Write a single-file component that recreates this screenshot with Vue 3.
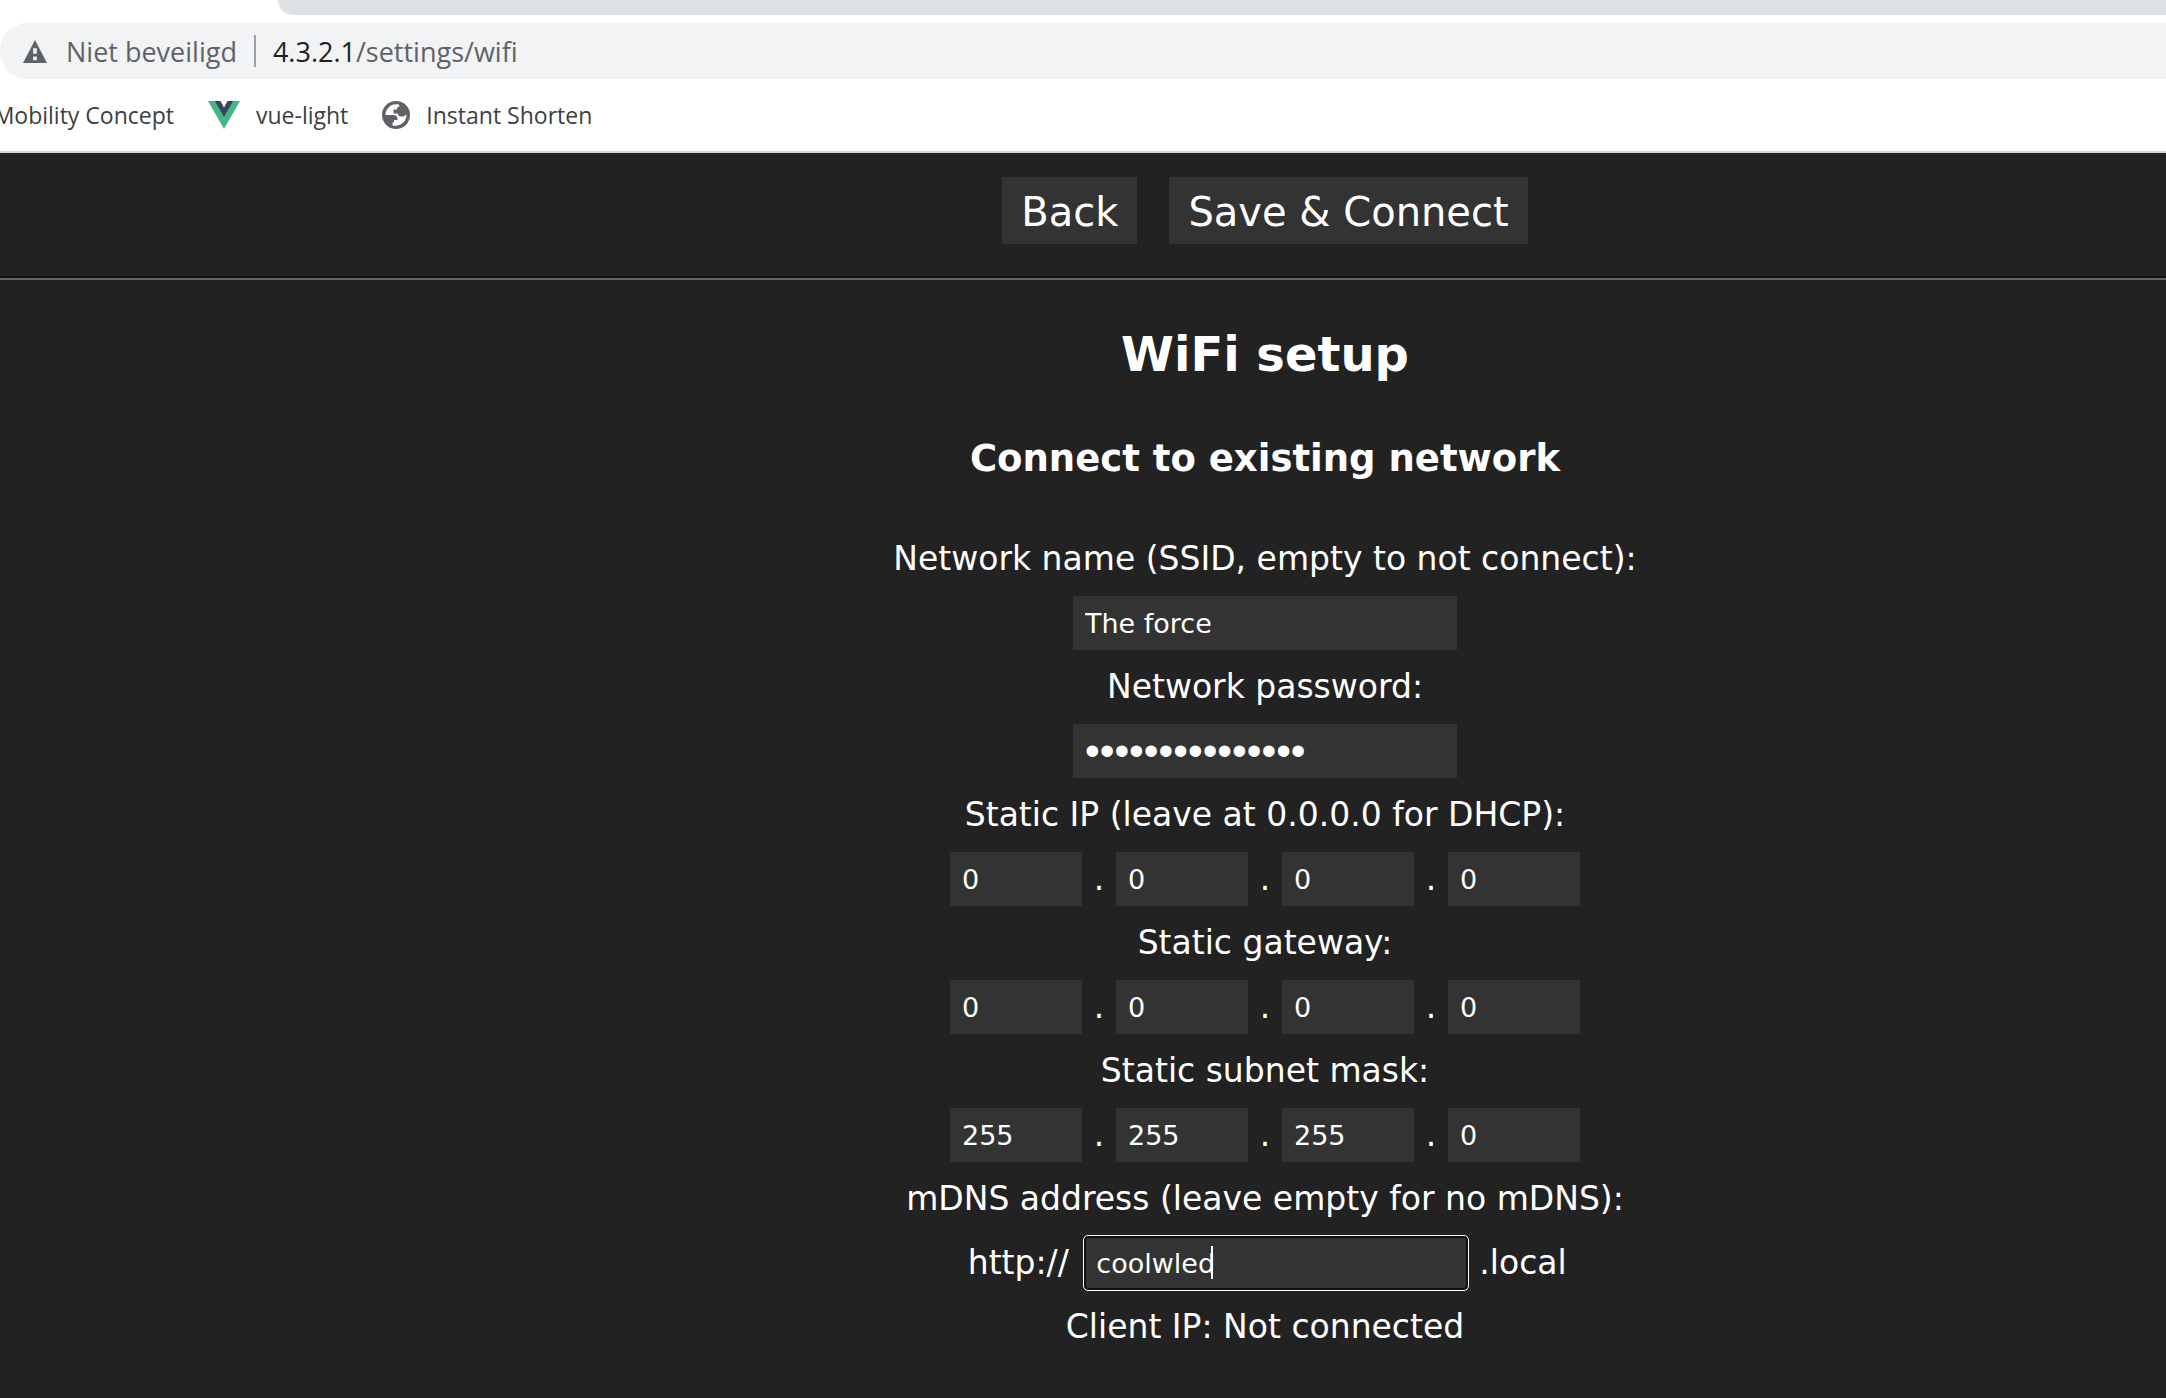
<script setup>
import { ref, reactive } from 'vue'

const ssid = ref('The force')
const password = ref('maytheforcebe12')
const mdns = ref('coolwled')
const addresses = reactive([
  { id: 'ip', label: 'Static IP (leave at 0.0.0.0 for DHCP):', parts: ['0', '0', '0', '0'] },
  { id: 'gateway', label: 'Static gateway:', parts: ['0', '0', '0', '0'] },
  { id: 'subnet', label: 'Static subnet mask:', parts: ['255', '255', '255', '0'] },
])
</script>

<template>
  <div class="window">
    <header class="browser">
      <div class="tabs"></div>
      <div class="address">
        <svg class="warning" viewBox="0 0 26 26" aria-hidden="true">
          <path d="M13 1 26 26H0Z" fill="#5f6368" />
          <path d="M11 10h4v6h-4zM11 19h4v4h-4z" fill="#f1f3f4" />
        </svg>
        <span class="insecure">Niet beveiligd</span>
        <span class="divider"></span>
        <span class="url"><b>4.3.2.1</b>/settings/wifi</span>
      </div>
      <nav class="bookmarks">
        <a href="#" class="clipped">Mobility Concept</a>
        <a href="#">
          <svg class="vue" viewBox="0 0 32 28" aria-hidden="true">
            <path d="M0 0h6.5L16 16.5 25.5 0H32L16 28Z" fill="#41b883" />
            <path d="M6.5 0h6L16 6.5 19.5 0h6L16 16.5Z" fill="#35495e" />
          </svg>
          vue-light
        </a>
        <a href="#">
          <svg class="globe" viewBox="0 0 28 28" aria-hidden="true">
            <circle cx="14" cy="14" r="14" fill="#5f6368" />
            <path
              d="M16.5 3C14 3.500 10 3 7 6 4.500 8.500 3.500 11 3.500 14H11c3 0 4.500 1.500 4.500 4v1h-3.500v2.500h-1.500V24.500c7 1.500 14-3 14-11l-1.500 1c-1 1-2.500 1-4 1-2 0-3-1-3-3h-4.500V8.500h3.500c0-2 .5-3 2.500-3Z"
              fill="#fff"
            />
          </svg>
          Instant Shorten
        </a>
      </nav>
    </header>

    <form class="page" @submit.prevent>
      <div class="actions">
        <button type="button">Back</button>
        <button type="submit">Save &amp; Connect</button>
      </div>
      <hr />
      <main class="settings">
        <h2>WiFi setup</h2>
        <h3>Connect to existing network</h3>
        <label class="row" for="ssid">Network name (SSID, empty to not connect):</label>
        <div class="row"><input id="ssid" v-model="ssid" class="wide" type="text" /></div>
        <label class="row" for="password">Network password:</label>
        <div class="row"><input id="password" v-model="password" class="wide" type="password" /></div>
        <template v-for="address in addresses" :key="address.id">
          <label class="row" :for="address.id + '-0'">{{ address.label }}</label>
          <div class="row">
            <template v-for="(part, i) in address.parts" :key="i">
              <span v-if="i" class="dot">.</span>
              <input
                :id="address.id + '-' + i"
                v-model="address.parts[i]"
                class="octet"
                type="text"
                inputmode="numeric"
                :aria-label="address.label + ' ' + (i + 1)"
              />
            </template>
          </div>
        </template>
        <label class="row" for="mdns">mDNS address (leave empty for no mDNS):</label>
        <div class="row mdns">
          <span class="scheme">http://</span>
          <span class="focused">
            <input id="mdns" v-model="mdns" class="wide" type="text" />
            <span class="caret"></span>
          </span>
          <span>.local</span>
        </div>
        <div class="row">Client IP: Not connected</div>
      </main>
    </form>
  </div>
</template>

<style>
body {
  margin: 0;
  background: #222;
}
</style>

<style scoped>
.window {
  min-height: 100vh;
  overflow: hidden;
  display: flex;
  flex-direction: column;
}
.browser {
  background: #fff;
  border-bottom: 2px solid #d4d4d4;
  font-family: "Open Sans", "Noto Sans", sans-serif;
}
.tabs {
  height: 15px;
  margin-left: 278px;
  background: #dde1e6;
  border-bottom-left-radius: 16px;
}
.address {
  display: flex;
  align-items: center;
  height: 56px;
  margin-top: 8px;
  padding-left: 22px;
  background: #f1f3f4;
  border-radius: 28px 0 0 28px;
  color: #5f6368;
  font-size: 27px;
  white-space: nowrap;
}
.warning {
  width: 26px;
  height: 24px;
}
.insecure {
  margin-left: 18px;
}
.divider {
  width: 2px;
  height: 32px;
  margin: 0 17px;
  background: #9aa0a6;
}
.url b {
  color: #202124;
  font-weight: 400;
}
.bookmarks {
  display: flex;
  align-items: center;
  gap: 34px;
  height: 72px;
}
.bookmarks a {
  display: flex;
  align-items: center;
  gap: 16px;
  color: #3c4043;
  font-size: 23px;
  text-decoration: none;
  white-space: nowrap;
}
.bookmarks .clipped {
  width: 174px;
  justify-content: flex-end;
}
.vue {
  width: 32px;
  height: 28px;
}
.globe {
  width: 28px;
  height: 28px;
}
.page {
  flex: 1;
  color: #fff;
  font: 33px/64px "DejaVu Sans", sans-serif;
}
.actions,
.settings {
  /* the viewport is scrolled, so its centre sits right of the window's */
  padding-left: 364px;
}
.actions {
  display: flex;
  justify-content: center;
  gap: 32px;
  padding-top: 24px;
  padding-bottom: 32px;
}
button {
  height: 67px;
  padding: 3px 19px 0;
  border: 0;
  background: #333;
  color: #fff;
  font: 40px "DejaVu Sans", sans-serif;
}
hr {
  height: 2px;
  margin: 0;
  border: 0;
  border-top: 2px solid #111;
  background: #666;
}
.settings {
  display: flex;
  flex-direction: column;
  align-items: center;
}
h2 {
  margin: 44px 0 0;
  font-size: 48px;
  line-height: 60px;
}
h3 {
  margin: 51px 0 44px;
  font-size: 37px;
  line-height: 48px;
}
.row {
  display: flex;
  align-items: center;
  justify-content: center;
  height: 64px;
  white-space: nowrap;
}
input {
  box-sizing: border-box;
  height: 54px;
  padding: 0 12px;
  border: 0;
  border-radius: 0;
  background: #333;
  color: #fff;
  font: 27px "DejaVu Sans", sans-serif;
  outline: none;
}
input[type="password"] {
  font: 42px "Liberation Sans", sans-serif;
}
.wide {
  width: 384px;
}
.octet {
  width: 132px;
}
.dot {
  width: 34px;
  text-align: center;
}
.mdns {
  gap: 11px;
}
.scheme {
  width: 110px;
  text-align: center;
}
.focused {
  position: relative;
  display: flex;
}
.focused input {
  border: 2px solid #111;
  border-radius: 4px;
  outline: 1px solid #fff;
  padding: 0 10px;
}
.caret {
  position: absolute;
  top: 10px;
  left: 127px;
  width: 2px;
  height: 33px;
  background: #fff;
}
</style>
